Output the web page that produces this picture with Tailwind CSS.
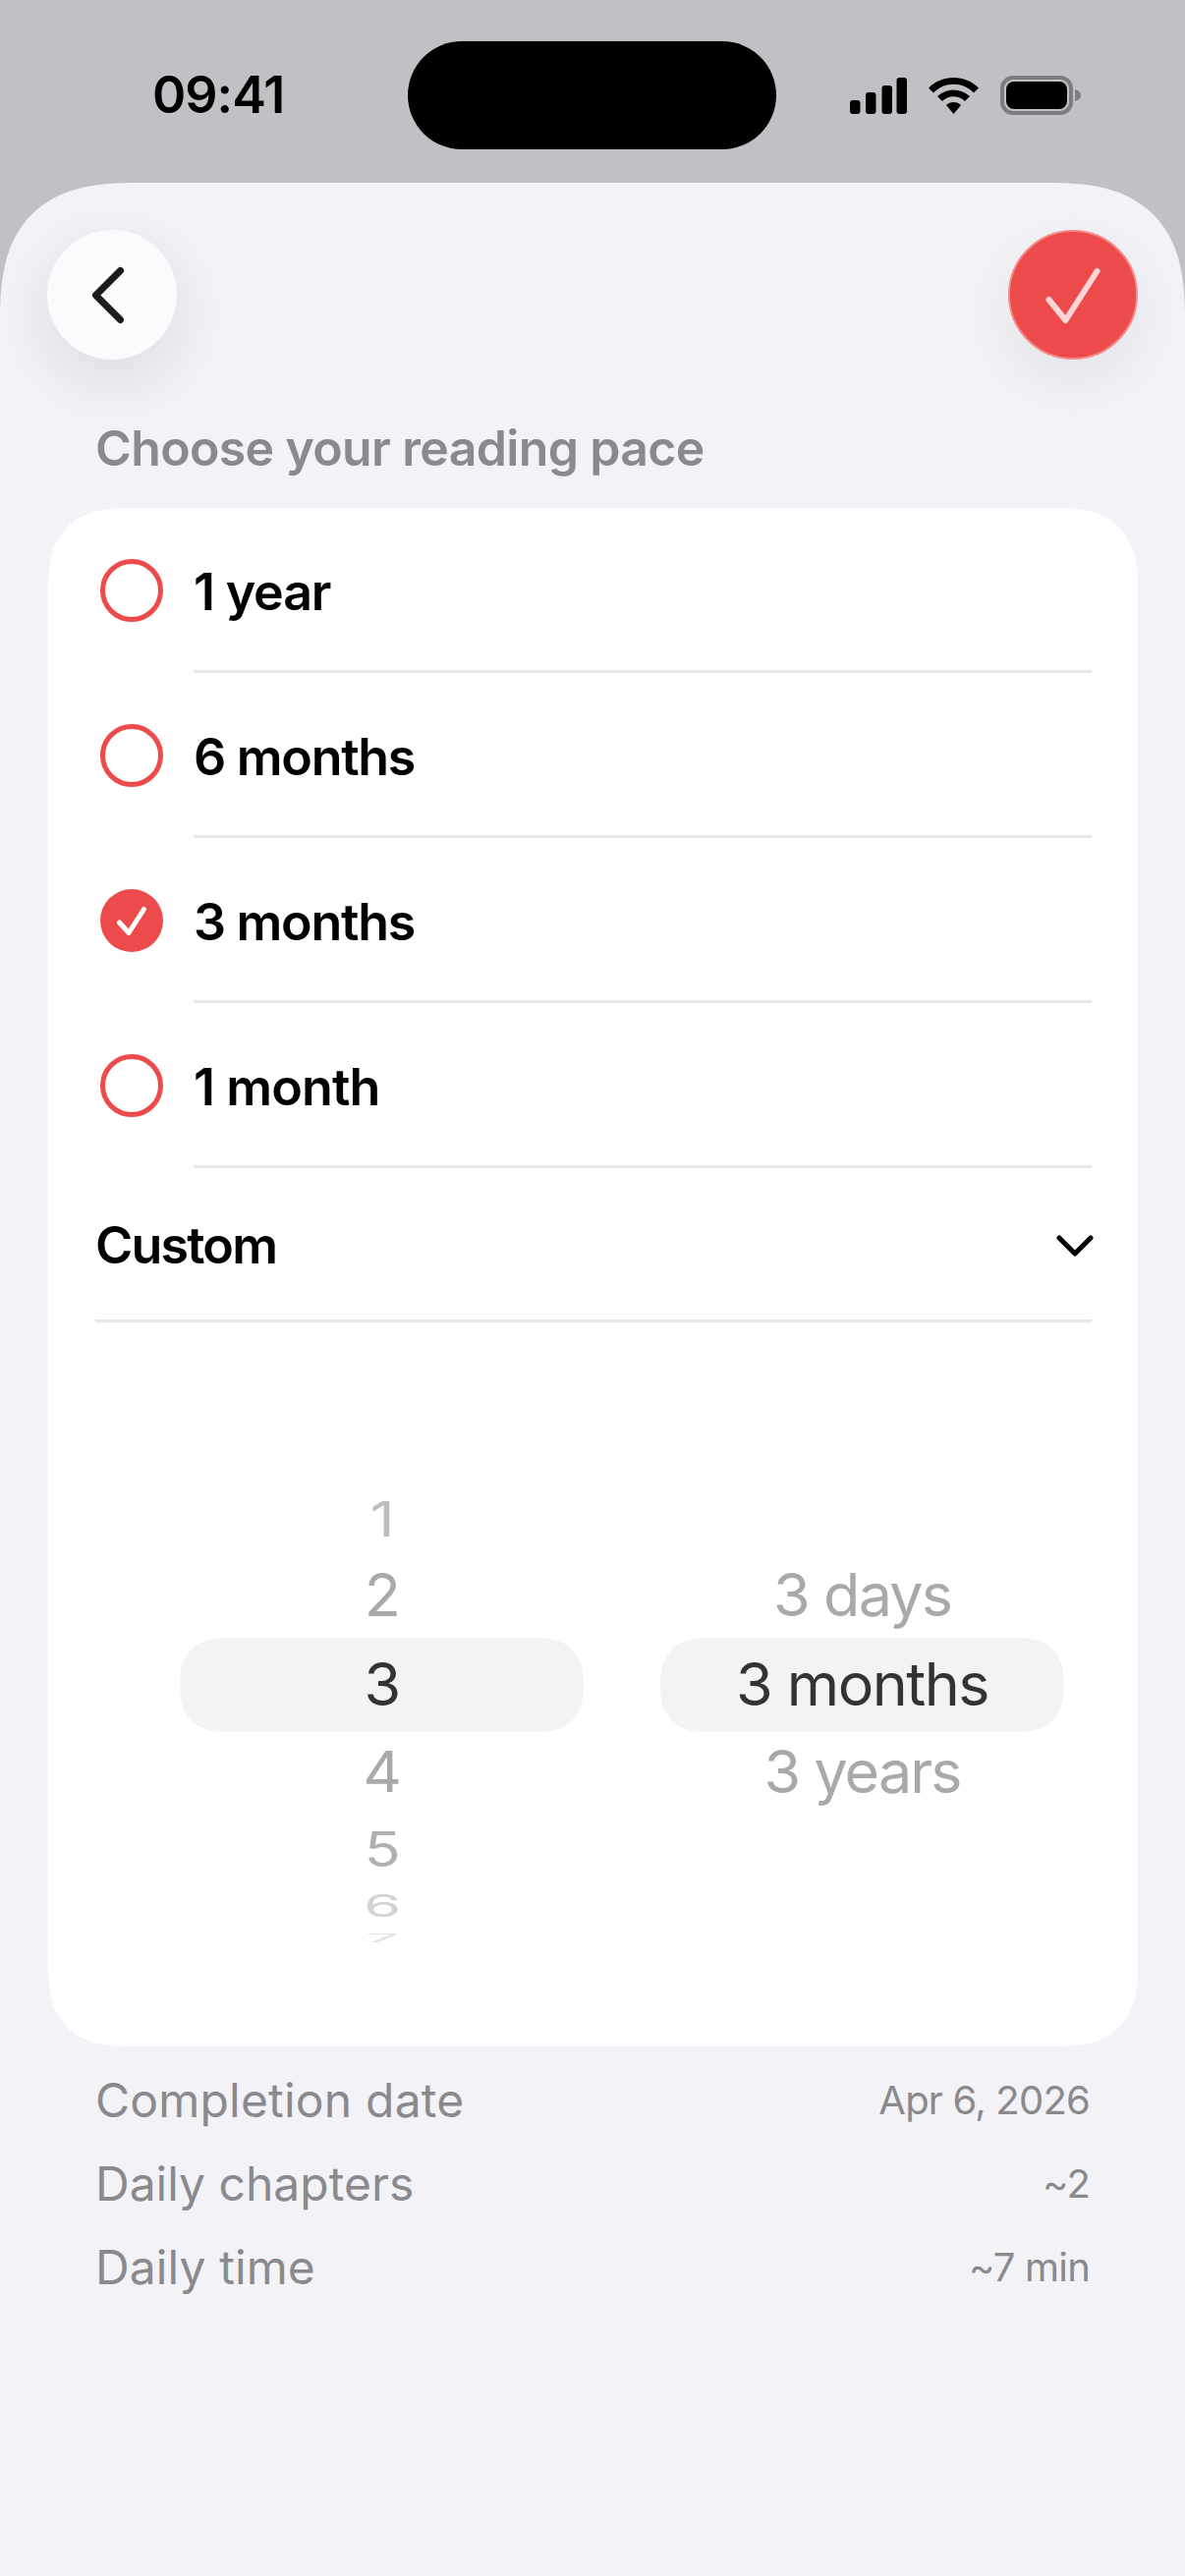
<!DOCTYPE html>
<html lang="en">
<head>
    <meta charset="UTF-8">
    <meta name="viewport" content="width=device-width, initial-scale=1.0">
    <title>Reading pace</title>
    <script src="https://cdn.jsdelivr.net/npm/@tailwindcss/browser@4"></script>
</head>
<body class="w-[1206px] h-[2622px] overflow-hidden bg-[#c1c0c5] font-['Inter',sans-serif]">
    <!-- Status bar -->
    <div class="h-[186px] flex pt-[42px]">
        <div class="w-[415px] h-[110px] flex items-center pl-[155px]">
            <span class="text-[52px] leading-none font-semibold text-black tracking-[-1px]">09:41</span>
        </div>
        <div class="w-[375px] h-[110px] rounded-[55px] bg-black"></div>
        <div class="flex-1 h-[110px] flex items-center pl-[75px] gap-[22px]">
            <svg width="58" height="37" viewBox="0 0 58 37" fill="#000">
                <rect x="0" y="23" width="10.500" height="14" rx="3"/>
                <rect x="16" y="15" width="10.500" height="22" rx="3"/>
                <rect x="32.500" y="8" width="10.500" height="29" rx="3"/>
                <rect x="47.500" y="0" width="10.500" height="37" rx="3"/>
            </svg>
            <svg width="51" height="37" viewBox="0 0 51 37" fill="#000">
                <path d="M25.500 0C16 0 7 3.500 0 10.500L5 15.500C10.500 10 17.500 6.800 25.500 6.800C33.500 6.800 40.500 10 46 15.500L51 10.500C44 3.500 35 0 25.500 0Z"/>
                <path d="M25.500 12.500C19.500 12.500 13.800 14.700 9 19L14 24C17 21 21 19.300 25.500 19.300C30 19.300 34 21 37 24L42 19C37.200 14.700 31.500 12.500 25.500 12.500Z"/>
                <path d="M25.500 25C22.500 25 20 26 18 28L25.500 37L33 28C31 26 28.500 25 25.500 25Z"/>
            </svg>
            <svg width="82" height="40" viewBox="0 0 82 40" fill="none">
                <rect x="2" y="2" width="70" height="36" rx="11" stroke="#7d7d80" stroke-width="4"/>
                <rect x="6" y="6" width="62" height="28" rx="8" fill="#000"/>
                <path d="M76 14C79.500 15 82 17 82 20C82 23 79.500 25 76 26Z" fill="#7d7d80"/>
            </svg>
        </div>
    </div>

    <!-- Sheet -->
    <div class="h-[2436px] rounded-t-[140px] [corner-shape:superellipse(1.4)] bg-[#f2f2f7] px-[48px]">
        <div class="flex justify-between pt-[48px]">
            <div class="w-[132px] h-[132px] rounded-full bg-[#fbfbfe] flex items-center justify-center shadow-[0_20px_70px_rgba(0,0,0,0.1)]">
                <svg width="42" height="60" viewBox="0 0 42 60" fill="none" class="mr-[6px]">
                    <path d="M32.500 5.500L7.500 30.500L32.500 55.500" stroke="#1c1c1e" stroke-width="7" stroke-linecap="round" stroke-linejoin="round"/>
                </svg>
            </div>
            <div class="w-[132px] h-[132px] rounded-full bg-[#ed4b4b] border-[2px] border-[#f58a8a] flex items-center justify-center shadow-[0_20px_70px_rgba(0,0,0,0.07)]">
                <svg width="56" height="60" viewBox="0 0 56 60" fill="none">
                    <path d="M3.500 35L20.500 56L52.500 6" stroke="#ffd4d4" stroke-width="6" stroke-linecap="round" stroke-linejoin="round"/>
                </svg>
            </div>
        </div>

        <h2 class="mt-[60px] pl-[49px] h-[60px] text-[50px] leading-[60px] font-semibold text-[#8a8a8e] tracking-[-0.65px]">Choose your reading pace</h2>

        <!-- Options card -->
        <div class="mt-[31px] ml-px w-[1109px] h-[1566px] rounded-[84px] [corner-shape:superellipse(1.4)] bg-white">
            <div class="h-[168px] flex items-center pl-[53px] pr-[47px]">
                <div class="w-[64px] h-[64px] rounded-full border-[5px] border-[#ed4b4b]"></div>
                <div class="flex-1 ml-[31px] h-full pt-[6px] flex items-center border-b-[3px] border-[#e8e8ea] text-[52px] font-semibold text-black tracking-[-1.2px]">1 year</div>
            </div>
            <div class="h-[168px] flex items-center pl-[53px] pr-[47px]">
                <div class="w-[64px] h-[64px] rounded-full border-[5px] border-[#ed4b4b]"></div>
                <div class="flex-1 ml-[31px] h-full pt-[6px] flex items-center border-b-[3px] border-[#e8e8ea] text-[52px] font-semibold text-black tracking-[-1.3px]">6 months</div>
            </div>
            <div class="h-[168px] flex items-center pl-[53px] pr-[47px]">
                <div class="w-[64px] h-[64px] rounded-full bg-[#ed4b4b] flex items-center justify-center">
                    <svg width="32" height="30" viewBox="0 0 32 30" fill="none">
                        <path d="M3.500 17L13 27.500L28.500 3.500" stroke="#fff" stroke-width="5" stroke-linecap="round" stroke-linejoin="round"/>
                    </svg>
                </div>
                <div class="flex-1 ml-[31px] h-full pt-[6px] flex items-center border-b-[3px] border-[#e8e8ea] text-[52px] font-semibold text-black tracking-[-1.3px]">3 months</div>
            </div>
            <div class="h-[168px] flex items-center pl-[53px] pr-[47px]">
                <div class="w-[64px] h-[64px] rounded-full border-[5px] border-[#ed4b4b]"></div>
                <div class="flex-1 ml-[31px] h-full pt-[6px] flex items-center border-b-[3px] border-[#e8e8ea] text-[52px] font-semibold text-black tracking-[-0.9px]">1 month</div>
            </div>
            <div class="h-[157px] ml-[48px] mr-[47px] pt-[4px] flex items-center justify-between border-b-[3px] border-[#e8e8ea]">
                <span class="text-[52px] font-semibold text-black tracking-[-1.8px]">Custom</span>
                <svg width="38" height="24" viewBox="0 0 38 24" fill="none" class="-mr-[2px]">
                    <path d="M3 4L19 20L35 4" stroke="#000" stroke-width="5" stroke-linecap="round" stroke-linejoin="round"/>
                </svg>
            </div>

            <!-- Picker -->
            <div class="mt-[167px] pl-[134px] flex gap-[78px] text-[61px] font-normal tracking-[-1.5px]">
                <div class="w-[411px]">
                    <div class="h-[68px] flex items-center justify-center text-[#bdbdbd]"><span class="scale-y-[0.8]">1</span></div>
                    <div class="h-[86px] flex items-center justify-center text-[#a9a9a9]">2</div>
                    <div class="h-[96px] rounded-[48px] [corner-shape:superellipse(1.3)] bg-[#f3f3f3] flex items-center justify-center text-[#333333]">3</div>
                    <div class="h-[82px] flex items-center justify-center text-[#a9a9a9]"><span class="scale-y-[0.95]">4</span></div>
                    <div class="h-[76px] flex items-center justify-center text-[#b0b0b0]"><span class="scale-y-[0.8]">5</span></div>
                    <div class="h-[40px] flex items-center justify-center text-[#d2d2d2]"><span class="scale-y-[0.5]">6</span></div>
                    <div class="h-[24px] flex items-center justify-center text-[#e2e2e2]"><span class="scale-y-[0.2]">7</span></div>
                </div>
                <div class="w-[411px]">
                    <div class="h-[68px]"></div>
                    <div class="h-[86px] flex items-center justify-center text-[#a9a9a9] tracking-[-1.8px]">3 days</div>
                    <div class="h-[96px] rounded-[48px] [corner-shape:superellipse(1.3)] bg-[#f3f3f3] flex items-center justify-center text-[#333333]">3 months</div>
                    <div class="h-[82px] flex items-center justify-center text-[#a9a9a9] tracking-[-1.9px]">3 years</div>
                </div>
            </div>
        </div>

        <!-- Summary -->
        <div class="mt-[12px] pl-[49px] pr-[49px] text-[#8a8a8e]">
            <div class="h-[85px] flex items-center justify-between">
                <span class="text-[48px] tracking-[0.2px]">Completion date</span>
                <span class="text-[40px] tracking-[-0.8px]">Apr 6, 2026</span>
            </div>
            <div class="h-[85px] flex items-center justify-between">
                <span class="text-[48px]">Daily chapters</span>
                <span class="text-[40px] tracking-[-0.8px]">~2</span>
            </div>
            <div class="h-[85px] flex items-center justify-between">
                <span class="text-[48px] tracking-[0.1px]">Daily time</span>
                <span class="text-[40px] tracking-[-0.8px]">~7 min</span>
            </div>
        </div>
    </div>
</body>
</html>
